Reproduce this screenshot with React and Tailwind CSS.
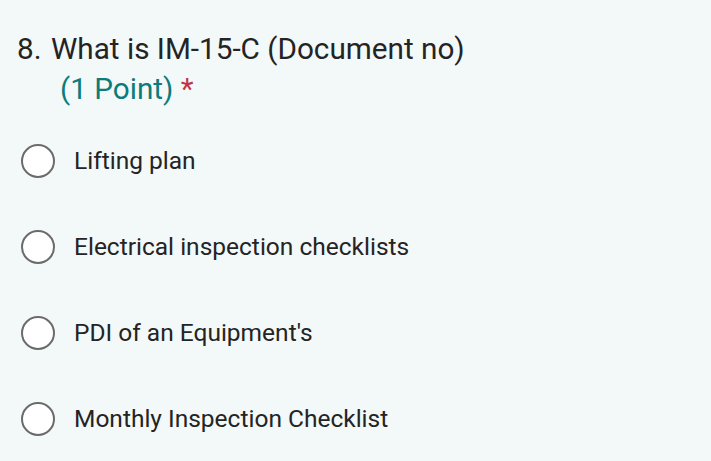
const options = [
  'Lifting plan',
  'Electrical inspection checklists',
  "PDI of an Equipment's",
  'Monthly Inspection Checklist',
]

export default function App() {
  return (
    <div className="w-[711px] h-[461px] overflow-hidden bg-[#f3f8f9] font-['Roboto',sans-serif] text-[#242424]">
      {/* Question header */}
      <div className="flex pl-[17px] pt-[29px]">
        <span className="text-[29.7px] leading-[40px] w-[34px] shrink-0">8.</span>
        <div>
          <div className="text-[29.7px] leading-[40px]">What is IM-15-C (Document no)</div>
          <div className="text-[29.7px] leading-[40px] pl-[9px] text-[#0b7b7b]">
            (1 Point) <span className="text-[#c4314b]">*</span>
          </div>
        </div>
      </div>

      {/* Choices */}
      <div className="flex flex-col mt-[35px] pl-[21px] gap-[52px]">
        {options.map(opt => (
          <label key={opt} className="flex items-center gap-[19px] h-[34px]">
            <span className="w-[34px] h-[34px] rounded-full border-2 border-[#6b6b6b] bg-white shrink-0" />
            <span className="text-[24.5px]">{opt}</span>
          </label>
        ))}
      </div>
    </div>
  )
}
